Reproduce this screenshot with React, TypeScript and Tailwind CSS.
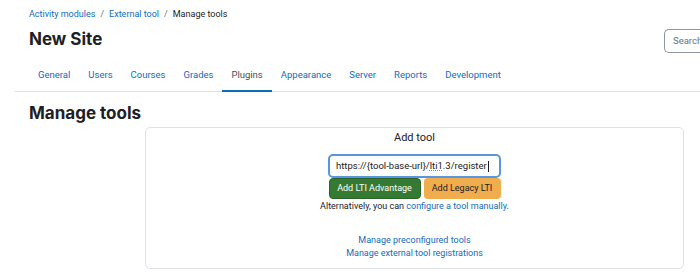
import React from "react";

const tabs = ["General", "Users", "Courses", "Grades", "Plugins", "Appearance", "Server", "Reports", "Development"];

export default function App() {
  return (
    <div className="w-[700px] h-[277px] overflow-hidden bg-white text-[#1d2125]" style={{ fontFamily: "Roboto, 'Liberation Sans', sans-serif" }}>
      <div className="flex items-start justify-between pl-[29px] pt-[8px]">
        <div className="flex flex-col">
          <div className="flex items-center gap-[5px] text-[9px] leading-[13px]">
            <a className="text-[#0f6cbf]">Activity modules</a>
            <span className="text-[#6a737b]">/</span>
            <a className="text-[#0f6cbf]">External tool</a>
            <span className="text-[#6a737b]">/</span>
            <span>Manage tools</span>
          </div>
          <h1 className="mt-[8px] text-[17px] font-bold leading-[20px]" style={{ fontFamily: "Inter, sans-serif" }}>New Site</h1>
        </div>
        <div className="mt-[21px] h-[24px] w-[36px] rounded-l-[5px] border border-r-0 border-[#8f959e] pl-[8px] text-[9.5px] leading-[22px] text-[#6a737b] whitespace-nowrap overflow-hidden">
          Search
        </div>
      </div>
      <div className="ml-[15px] mt-[15px] flex border-b border-[#dee2e6] pl-[14px]">
        {tabs.map((t) => (
          <div
            key={t}
            className={
              "px-[9px] pb-[9px] text-[9.5px] leading-[13px] -mb-px border-b-[2px] " +
              (t === "Plugins" ? "border-[#0f6cbf] text-[#495057]" : "text-[#0f6cbf] border-transparent")
            }
          >
            {t}
          </div>
        ))}
      </div>
      <h2 className="ml-[29px] mt-[10px] text-[17px] font-bold leading-[22px]" style={{ fontFamily: "Inter, sans-serif" }}>Manage tools</h2>
      <div className="ml-[145px] mt-[3px] w-[539px] h-[142px] rounded-[5px] border border-[#dee2e6] flex flex-col items-center">
        <div className="mt-[2px] text-[11px] leading-[16px]">Add tool</div>
        <div className="mt-[8px] flex flex-col items-center">
          <div className="flex items-center h-[24px] w-[173px] rounded-[5px] border-[2px] border-[#5a96e0] pl-[6px] text-[9.5px] leading-[20px] text-[#1d2125] whitespace-nowrap overflow-hidden">
            <span>
              https://{"{tool-base-url}"}/<span className="underline decoration-dotted decoration-[#e06c6c]">lti1</span>.3/register
            </span>
            <span className="ml-px inline-block h-[11px] w-px bg-[#1d2125]" />
          </div>
          <div className="flex gap-[3px]">
            <div className="h-[21px] w-[92px] rounded-[4px] bg-[#357a32] border border-[#2b6428] text-white text-[9px] leading-[19px] text-center whitespace-nowrap">
              Add LTI Advantage
            </div>
            <div className="h-[21px] w-[77px] rounded-[4px] bg-[#f0ad4e] text-[#1d2125] text-[9px] leading-[21px] text-center whitespace-nowrap">
              Add Legacy LTI
            </div>
          </div>
        </div>
        <div className="mt-[1px] text-[9px] leading-[13px] whitespace-nowrap">
          Alternatively, you can <a className="text-[#0f6cbf]">configure a tool manually</a>.
        </div>
        <div className="mt-[21px] flex flex-col items-center text-[9px] leading-[13px] text-[#0f6cbf] whitespace-nowrap">
          <a>Manage preconfigured tools</a>
          <a>Manage external tool registrations</a>
        </div>
      </div>
    </div>
  );
}
